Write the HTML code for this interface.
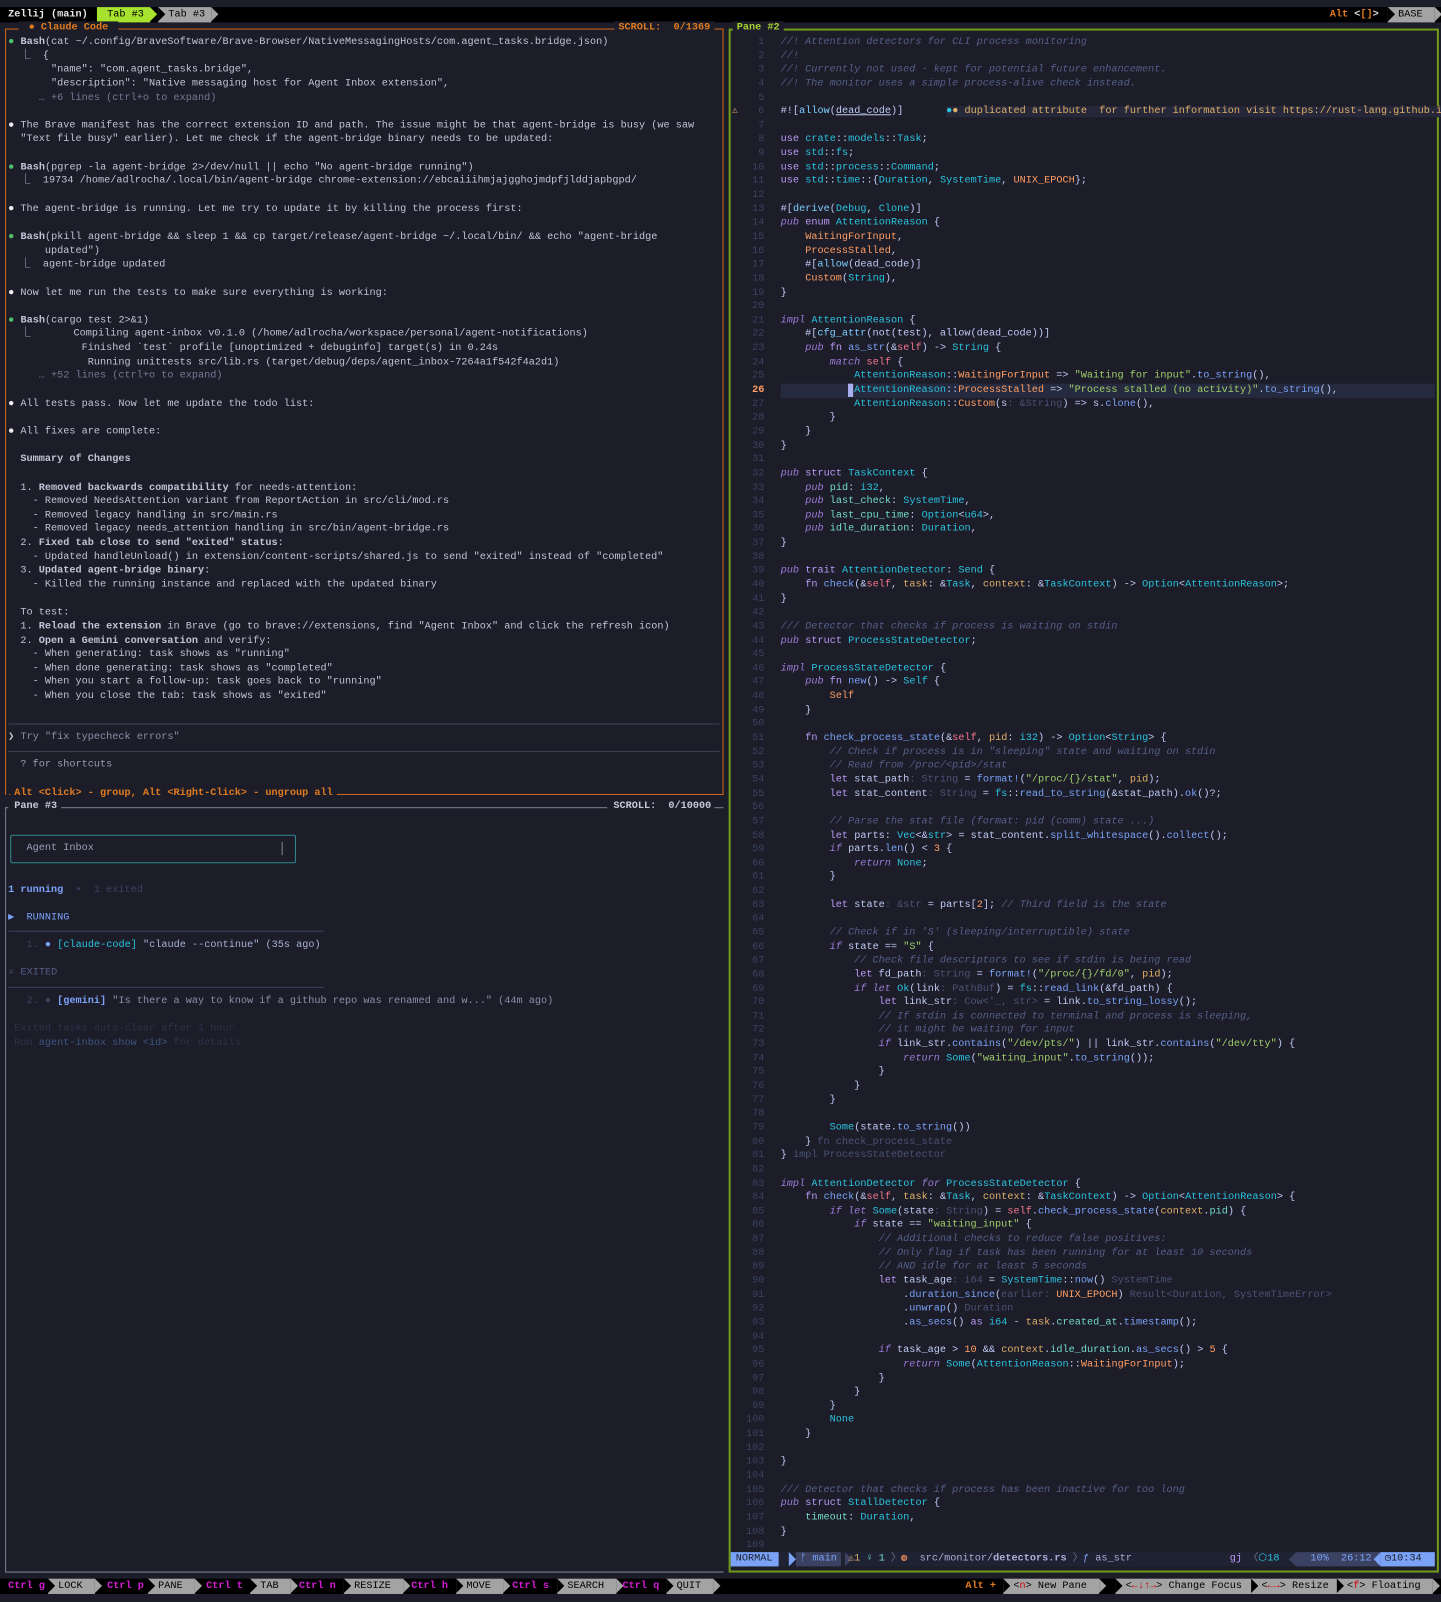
<!DOCTYPE html>
<html><head><meta charset="utf-8">
<style>
html,body{margin:0;padding:0;background:#1c1d29;width:1441px;height:1600px;overflow:hidden}
#w{position:absolute;left:0;top:1.5px;width:1412px;height:1568px;transform:scale(1.0205);transform-origin:0 0;background:#1c1d29;font-family:"Liberation Mono","DejaVu Sans Mono",monospace;font-size:10px;color:#c0c4d6}
.a{position:absolute;white-space:pre;line-height:13.65px}
.blk{position:absolute;left:0;width:1412px;height:15px;background:#000}
.bx{position:absolute;box-sizing:border-box}
.a.lines{white-space:normal}
.lines div{height:13.65px;white-space:pre}
.c{color:#565f89;font-style:italic}.k{color:#9d7cd8;font-style:italic}.kw{color:#bb9af7}
.t{color:#2ac3de}.f{color:#7aa2f7}.s{color:#9ece6a}.o{color:#ff9e64}.p{color:#73daca}
.h{color:#4b5275}.n{color:#c0caf5}.m{color:#7dcfff}.y{color:#e0af68}.r{color:#f7768e}
.b{font-weight:bold}.g{color:#737a94}.d{color:#3b4261}
#code div{position:relative;padding-left:51px}
#code .ln{position:absolute;left:0;width:35px;text-align:right;color:#3b4261}
.tag{position:absolute;top:0;height:15px;line-height:15px;background:#a3a3a3;color:#000;padding:0 6px 0 10px;white-space:pre}
.tag:after{content:"";position:absolute;right:-7px;top:0;border-left:7px solid #a3a3a3;border-top:7.5px solid transparent;border-bottom:7.5px solid transparent}
.tag:before{content:"";position:absolute;left:0;top:0;border-left:7px solid #000;border-top:7.5px solid transparent;border-bottom:7.5px solid transparent}
.mg{position:absolute;top:0;line-height:15px;color:#d41cd4;font-weight:bold;white-space:pre}
</style></head><body><div id="w">

<div class="blk" style="top:5px"></div>
<div class="a b" style="left:8px;top:5px;line-height:15px;color:#e8e8e8">Zellij (main)</div>
<div class="bx" style="left:95px;top:5px;height:15px;width:52px;background:#a6e22e;"></div>
<div class="bx" style="left:147px;top:5px;border-left:7px solid #a6e22e;border-top:7.5px solid transparent;border-bottom:7.5px solid transparent"></div>
<div class="a" style="left:105px;top:5px;line-height:15px;color:#000">Tab #3</div>
<div class="bx" style="left:155px;top:5px;height:15px;width:52px;background:#a3a3a3;"></div>
<div class="bx" style="left:207px;top:5px;border-left:7px solid #a3a3a3;border-top:7.5px solid transparent;border-bottom:7.5px solid transparent"></div>
<div class="bx" style="left:155px;top:5px;border-left:7px solid #000;border-top:7.5px solid transparent;border-bottom:7.5px solid transparent"></div>
<div class="a" style="left:165px;top:5px;line-height:15px;color:#000">Tab #3</div>
<div class="a b" style="left:1303px;top:5px;line-height:15px;color:#e07a1f">Alt <span style="color:#ddd">&lt;</span>[]<span style="color:#ddd">&gt;</span></div>
<div class="tag" style="left:1360px;top:5px">BASE </div>

<div class="bx" style="left:5px;top:26px;width:704px;height:751px;border:1px solid #d2691e;border-right:none;border-bottom:none"></div>
<div class="bx" style="left:9px;top:776px;width:700px;height:1px;background:#d2691e"></div>
<div class="a b" style="left:18px;top:19px;background:#1c1d29;color:#e07a1f;padding:0 4px"> ● Claude Code </div>
<div class="a b" style="left:602px;top:19px;background:#1c1d29;color:#e07a1f;padding:0 4px">SCROLL:  0/1369</div>
<div class="a b" style="left:10px;top:769px;background:#1c1d29;color:#e07a1f;padding:0 4px">Alt &lt;Click&gt; - group, Alt &lt;Right-Click&gt; - ungroup all</div>

<div class="a lines" style="left:8px;top:33px;width:697px">
<div><span style="color:#4fc06a">●</span> <span class="b">Bash</span>(cat ~/.config/BraveSoftware/Brave-Browser/NativeMessagingHosts/com.agent_tasks.bridge.json)</div>
<div>  ⎿  {</div>
<div>       "name": "com.agent_tasks.bridge",</div>
<div>       "description": "Native messaging host for Agent Inbox extension",</div>
<div class="g">     … +6 lines (ctrl+o to expand)</div>
<div></div>
<div><span style="color:#eee">●</span> The Brave manifest has the correct extension ID and path. The issue might be that agent-bridge is busy (we saw</div>
<div>  "Text file busy" earlier). Let me check if the agent-bridge binary needs to be updated:</div>
<div></div>
<div><span style="color:#4fc06a">●</span> <span class="b">Bash</span>(pgrep -la agent-bridge 2&gt;/dev/null || echo "No agent-bridge running")</div>
<div>  ⎿  19734 /home/adlrocha/.local/bin/agent-bridge chrome-extension://ebcaiiihmjajgghojmdpfjlddjapbgpd/</div>
<div></div>
<div><span style="color:#eee">●</span> The agent-bridge is running. Let me try to update it by killing the process first:</div>
<div></div>
<div><span style="color:#4fc06a">●</span> <span class="b">Bash</span>(pkill agent-bridge &amp;&amp; sleep 1 &amp;&amp; cp target/release/agent-bridge ~/.local/bin/ &amp;&amp; echo "agent-bridge</div>
<div>      updated")</div>
<div>  ⎿  agent-bridge updated</div>
<div></div>
<div><span style="color:#eee">●</span> Now let me run the tests to make sure everything is working:</div>
<div></div>
<div><span style="color:#4fc06a">●</span> <span class="b">Bash</span>(cargo test 2&gt;&amp;1)</div>
<div>  ⎿       Compiling agent-inbox v0.1.0 (/home/adlrocha/workspace/personal/agent-notifications)</div>
<div>            Finished `test` profile [unoptimized + debuginfo] target(s) in 0.24s</div>
<div>             Running unittests src/lib.rs (target/debug/deps/agent_inbox-7264a1f542f4a2d1)</div>
<div class="g">     … +52 lines (ctrl+o to expand)</div>
<div></div>
<div><span style="color:#eee">●</span> All tests pass. Now let me update the todo list:</div>
<div></div>
<div><span style="color:#eee">●</span> All fixes are complete:</div>
<div></div>
<div class="b">  Summary of Changes</div>
<div></div>
<div>  1. <b>Removed backwards compatibility</b> for needs-attention:</div>
<div>    - Removed NeedsAttention variant from ReportAction in src/cli/mod.rs</div>
<div>    - Removed legacy handling in src/main.rs</div>
<div>    - Removed legacy needs_attention handling in src/bin/agent-bridge.rs</div>
<div>  2. <b>Fixed tab close to send "exited" status</b>:</div>
<div>    - Updated handleUnload() in extension/content-scripts/shared.js to send "exited" instead of "completed"</div>
<div>  3. <b>Updated agent-bridge binary</b>:</div>
<div>    - Killed the running instance and replaced with the updated binary</div>
<div></div>
<div>  To test:</div>
<div>  1. <b>Reload the extension</b> in Brave (go to brave://extensions, find "Agent Inbox" and click the refresh icon)</div>
<div>  2. <b>Open a Gemini conversation</b> and verify:</div>
<div>    - When generating: task shows as "running"</div>
<div>    - When done generating: task shows as "completed"</div>
<div>    - When you start a follow-up: task goes back to "running"</div>
<div>    - When you close the tab: task shows as "exited"</div>
</div>
<div class="bx" style="left:8px;top:707px;width:697px;height:1px;background:#3e4256"></div>
<div class="a" style="left:8px;top:714px;color:#8a8fa6"><span style="color:#ccc">❯</span> Try "fix typecheck errors"</div>
<div class="bx" style="left:8px;top:734px;width:697px;height:1px;background:#3e4256"></div>
<div class="a" style="left:8px;top:741px;color:#9a9fb4">  ? for shortcuts</div>

<div class="bx" style="left:5px;top:789px;width:704px;height:750px;border:1px solid #7a7f96;border-top:none;border-right:none"></div>
<div class="bx" style="left:5px;top:789px;width:3px;height:1px;background:#7a7f96"></div>
<div class="bx" style="left:60px;top:789px;width:535px;height:1px;background:#7a7f96"></div>
<div class="bx" style="left:700px;top:789px;width:9px;height:1px;background:#7a7f96"></div>
<div class="bx" style="left:8px;top:1538px;width:701px;height:1px;background:#7a7f96"></div>
<div class="a b" style="left:14px;top:782px;color:#c8cad8">Pane #3</div>
<div class="a b" style="left:601px;top:782px;color:#c8cad8">SCROLL:  0/10000</div>
<div class="bx" style="left:10px;top:816px;width:280px;height:28px;border:1px solid #2e8a8f;border-radius:2px"></div>
<div class="bx" style="left:276px;top:823px;width:1px;height:13px;background:#888"></div>
<div class="a" style="left:26px;top:823px;color:#9aa0b8">Agent Inbox</div>
<div class="a" style="left:8px;top:864px"><span class="b f">1 running</span>  <span class="d">•  1 exited</span></div>
<div class="a" style="left:8px;top:891px;color:#7aa2f7">▶  RUNNING</div>
<div class="bx" style="left:8px;top:910px;width:309px;height:1px;background:#3b4261"></div>
<div class="a" style="left:8px;top:918px"><span class="d">   1.</span> <span class="f">●</span> <span class="t">[claude-code]</span> <span style="color:#a9b1d6">"claude --continue" (35s ago)</span></div>
<div class="a" style="left:8px;top:945px;color:#3b4261"><span>✕</span> <span style="color:#565f89">EXITED</span></div>
<div class="bx" style="left:8px;top:965px;width:309px;height:1px;background:#3b4261"></div>
<div class="a" style="left:8px;top:973px"><span class="d">   2. ●</span> <span class="f b">[gemini]</span> <span style="color:#8a90a8">"Is there a way to know if a github repo was renamed and w..." (44m ago)</span></div>
<div class="a" style="left:14px;top:1000px;color:#2d3249">Exited tasks auto-clear after 1 hour</div>
<div class="a" style="left:14px;top:1014px;color:#2d3249">Run <span style="color:#3d5580">agent-inbox show &lt;id&gt;</span> for details</div>

<div class="bx" style="left:714px;top:26px;width:696px;height:1513px;border:2px solid #6f9a1a"></div>
<div class="a b" style="left:718px;top:19px;background:#1c1d29;color:#a6d22e;padding:0 4px">Pane #2</div>
<div class="bx" style="left:708px;top:26px;width:1px;height:751px;background:#d2691e"></div>

<div class="bx" style="left:765px;top:374px;width:641px;height:13.65px;background:#262a3e"></div>
<div class="bx" style="left:831px;top:374px;width:5px;height:13px;background:#a9b1f0"></div>
<div class="a" style="left:717px;top:101px;color:#e0af68">⚠</div>

<div id="code" class="a lines" style="left:714px;top:33px;width:692px;color:#c0caf5">
<div><span class="ln">1</span><span class="c">//! Attention detectors for CLI process monitoring</span></div>
<div><span class="ln">2</span><span class="c">//!</span></div>
<div><span class="ln">3</span><span class="c">//! Currently not used - kept for potential future enhancement.</span></div>
<div><span class="ln">4</span><span class="c">//! The monitor uses a simple process-alive check instead.</span></div>
<div><span class="ln">5</span></div>
<div><span class="ln">6</span>#![<span class="m">allow</span>(<u>dead_code</u>)]       <span style="background:#26283a;color:#e0af68"><span class="t">●</span>● duplicated attribute  for further information visit https://rust-lang.github.i</span></div>
<div><span class="ln">7</span></div>
<div><span class="ln">8</span><span class="kw">use</span> <span class="t">crate</span>::<span class="t">models</span>::<span class="t">Task</span>;</div>
<div><span class="ln">9</span><span class="kw">use</span> <span class="t">std</span>::<span class="t">fs</span>;</div>
<div><span class="ln">10</span><span class="kw">use</span> <span class="t">std</span>::<span class="t">process</span>::<span class="t">Command</span>;</div>
<div><span class="ln">11</span><span class="kw">use</span> <span class="t">std</span>::<span class="t">time</span>::{<span class="t">Duration</span>, <span class="t">SystemTime</span>, <span class="o">UNIX_EPOCH</span>};</div>
<div><span class="ln">12</span></div>
<div><span class="ln">13</span>#[<span class="m">derive</span>(<span class="t">Debug</span>, <span class="t">Clone</span>)]</div>
<div><span class="ln">14</span><span class="k">pub</span> <span class="kw">enum</span> <span class="t">AttentionReason</span> {</div>
<div><span class="ln">15</span>    <span class="o">WaitingForInput</span>,</div>
<div><span class="ln">16</span>    <span class="o">ProcessStalled</span>,</div>
<div><span class="ln">17</span>    #[<span class="m">allow</span>(dead_code)]</div>
<div><span class="ln">18</span>    <span class="o">Custom</span>(<span class="t">String</span>),</div>
<div><span class="ln">19</span>}</div>
<div><span class="ln">20</span></div>
<div><span class="ln">21</span><span class="k">impl</span> <span class="t">AttentionReason</span> {</div>
<div><span class="ln">22</span>    #[<span class="m">cfg_attr</span>(not(test), allow(dead_code))]</div>
<div><span class="ln">23</span>    <span class="k">pub</span> <span class="kw">fn</span> <span class="f">as_str</span>(&amp;<span class="r">self</span>) -&gt; <span class="t">String</span> {</div>
<div><span class="ln">24</span>        <span class="k">match</span> <span class="r">self</span> {</div>
<div><span class="ln">25</span>            <span class="t">AttentionReason</span>::<span class="o">WaitingForInput</span> =&gt; <span class="s">"Waiting for input"</span>.<span class="f">to_string</span>(),</div>
<div><span class="ln" style="color:#ff9e64;font-weight:bold">26</span>            <span class="t">AttentionReason</span>::<span class="o">ProcessStalled</span> =&gt; <span class="s">"Process stalled (no activity)"</span>.<span class="f">to_string</span>(),</div>
<div><span class="ln">27</span>            <span class="t">AttentionReason</span>::<span class="o">Custom</span>(s<span class="h">: &amp;String</span>) =&gt; s.<span class="f">clone</span>(),</div>
<div><span class="ln">28</span>        }</div>
<div><span class="ln">29</span>    }</div>
<div><span class="ln">30</span>}</div>
<div><span class="ln">31</span></div>
<div><span class="ln">32</span><span class="k">pub</span> <span class="kw">struct</span> <span class="t">TaskContext</span> {</div>
<div><span class="ln">33</span>    <span class="k">pub</span> <span class="p">pid</span>: <span class="t">i32</span>,</div>
<div><span class="ln">34</span>    <span class="k">pub</span> <span class="p">last_check</span>: <span class="t">SystemTime</span>,</div>
<div><span class="ln">35</span>    <span class="k">pub</span> <span class="p">last_cpu_time</span>: <span class="t">Option</span>&lt;<span class="t">u64</span>&gt;,</div>
<div><span class="ln">36</span>    <span class="k">pub</span> <span class="p">idle_duration</span>: <span class="t">Duration</span>,</div>
<div><span class="ln">37</span>}</div>
<div><span class="ln">38</span></div>
<div><span class="ln">39</span><span class="k">pub</span> <span class="kw">trait</span> <span class="t">AttentionDetector</span>: <span class="t">Send</span> {</div>
<div><span class="ln">40</span>    <span class="kw">fn</span> <span class="f">check</span>(&amp;<span class="r">self</span>, <span class="y">task</span>: &amp;<span class="t">Task</span>, <span class="y">context</span>: &amp;<span class="t">TaskContext</span>) -&gt; <span class="t">Option</span>&lt;<span class="t">AttentionReason</span>&gt;;</div>
<div><span class="ln">41</span>}</div>
<div><span class="ln">42</span></div>
<div><span class="ln">43</span><span class="c">/// Detector that checks if process is waiting on stdin</span></div>
<div><span class="ln">44</span><span class="k">pub</span> <span class="kw">struct</span> <span class="t">ProcessStateDetector</span>;</div>
<div><span class="ln">45</span></div>
<div><span class="ln">46</span><span class="k">impl</span> <span class="t">ProcessStateDetector</span> {</div>
<div><span class="ln">47</span>    <span class="k">pub</span> <span class="kw">fn</span> <span class="f">new</span>() -&gt; <span class="t">Self</span> {</div>
<div><span class="ln">48</span>        <span class="o">Self</span></div>
<div><span class="ln">49</span>    }</div>
<div><span class="ln">50</span></div>
<div><span class="ln">51</span>    <span class="kw">fn</span> <span class="f">check_process_state</span>(&amp;<span class="r">self</span>, <span class="y">pid</span>: <span class="t">i32</span>) -&gt; <span class="t">Option</span>&lt;<span class="t">String</span>&gt; {</div>
<div><span class="ln">52</span>        <span class="c">// Check if process is in "sleeping" state and waiting on stdin</span></div>
<div><span class="ln">53</span>        <span class="c">// Read from /proc/&lt;pid&gt;/stat</span></div>
<div><span class="ln">54</span>        <span class="kw">let</span> stat_path<span class="h">: String</span> = <span class="f">format!</span>(<span class="s">"/proc/{}/stat"</span>, <span class="y">pid</span>);</div>
<div><span class="ln">55</span>        <span class="kw">let</span> stat_content<span class="h">: String</span> = <span class="t">fs</span>::<span class="f">read_to_string</span>(&amp;stat_path).<span class="f">ok</span>()?;</div>
<div><span class="ln">56</span></div>
<div><span class="ln">57</span>        <span class="c">// Parse the stat file (format: pid (comm) state ...)</span></div>
<div><span class="ln">58</span>        <span class="kw">let</span> parts: <span class="t">Vec</span>&lt;&amp;<span class="t">str</span>&gt; = stat_content.<span class="f">split_whitespace</span>().<span class="f">collect</span>();</div>
<div><span class="ln">59</span>        <span class="k">if</span> parts.<span class="f">len</span>() &lt; <span class="o">3</span> {</div>
<div><span class="ln">60</span>            <span class="k">return</span> <span class="t">None</span>;</div>
<div><span class="ln">61</span>        }</div>
<div><span class="ln">62</span></div>
<div><span class="ln">63</span>        <span class="kw">let</span> state<span class="h">: &amp;str</span> = parts[<span class="o">2</span>]; <span class="c">// Third field is the state</span></div>
<div><span class="ln">64</span></div>
<div><span class="ln">65</span>        <span class="c">// Check if in 'S' (sleeping/interruptible) state</span></div>
<div><span class="ln">66</span>        <span class="k">if</span> state == <span class="s">"S"</span> {</div>
<div><span class="ln">67</span>            <span class="c">// Check file descriptors to see if stdin is being read</span></div>
<div><span class="ln">68</span>            <span class="kw">let</span> fd_path<span class="h">: String</span> = <span class="f">format!</span>(<span class="s">"/proc/{}/fd/0"</span>, <span class="y">pid</span>);</div>
<div><span class="ln">69</span>            <span class="k">if let</span> <span class="t">Ok</span>(link<span class="h">: PathBuf</span>) = <span class="t">fs</span>::<span class="f">read_link</span>(&amp;fd_path) {</div>
<div><span class="ln">70</span>                <span class="kw">let</span> link_str<span class="h">: Cow&lt;'_, str&gt;</span> = link.<span class="f">to_string_lossy</span>();</div>
<div><span class="ln">71</span>                <span class="c">// If stdin is connected to terminal and process is sleeping,</span></div>
<div><span class="ln">72</span>                <span class="c">// it might be waiting for input</span></div>
<div><span class="ln">73</span>                <span class="k">if</span> link_str.<span class="f">contains</span>(<span class="s">"/dev/pts/"</span>) || link_str.<span class="f">contains</span>(<span class="s">"/dev/tty"</span>) {</div>
<div><span class="ln">74</span>                    <span class="k">return</span> <span class="t">Some</span>(<span class="s">"waiting_input"</span>.<span class="f">to_string</span>());</div>
<div><span class="ln">75</span>                }</div>
<div><span class="ln">76</span>            }</div>
<div><span class="ln">77</span>        }</div>
<div><span class="ln">78</span></div>
<div><span class="ln">79</span>        <span class="t">Some</span>(state.<span class="f">to_string</span>())</div>
<div><span class="ln">80</span>    } <span class="h">fn check_process_state</span></div>
<div><span class="ln">81</span>} <span class="h">impl ProcessStateDetector</span></div>
<div><span class="ln">82</span></div>
<div><span class="ln">83</span><span class="k">impl</span> <span class="t">AttentionDetector</span> <span class="k">for</span> <span class="t">ProcessStateDetector</span> {</div>
<div><span class="ln">84</span>    <span class="kw">fn</span> <span class="f">check</span>(&amp;<span class="r">self</span>, <span class="y">task</span>: &amp;<span class="t">Task</span>, <span class="y">context</span>: &amp;<span class="t">TaskContext</span>) -&gt; <span class="t">Option</span>&lt;<span class="t">AttentionReason</span>&gt; {</div>
<div><span class="ln">85</span>        <span class="k">if let</span> <span class="t">Some</span>(state<span class="h">: String</span>) = <span class="r">self</span>.<span class="f">check_process_state</span>(<span class="y">context</span>.<span class="p">pid</span>) {</div>
<div><span class="ln">86</span>            <span class="k">if</span> state == <span class="s">"waiting_input"</span> {</div>
<div><span class="ln">87</span>                <span class="c">// Additional checks to reduce false positives:</span></div>
<div><span class="ln">88</span>                <span class="c">// Only flag if task has been running for at least 10 seconds</span></div>
<div><span class="ln">89</span>                <span class="c">// AND idle for at least 5 seconds</span></div>
<div><span class="ln">90</span>                <span class="kw">let</span> task_age<span class="h">: i64</span> = <span class="t">SystemTime</span>::<span class="f">now</span>() <span class="h">SystemTime</span></div>
<div><span class="ln">91</span>                    .<span class="f">duration_since</span>(<span class="h">earlier: </span><span class="o">UNIX_EPOCH</span>) <span class="h">Result&lt;Duration, SystemTimeError&gt;</span></div>
<div><span class="ln">92</span>                    .<span class="f">unwrap</span>() <span class="h">Duration</span></div>
<div><span class="ln">93</span>                    .<span class="f">as_secs</span>() <span class="kw">as</span> <span class="t">i64</span> - <span class="y">task</span>.<span class="p">created_at</span>.<span class="f">timestamp</span>();</div>
<div><span class="ln">94</span></div>
<div><span class="ln">95</span>                <span class="k">if</span> task_age &gt; <span class="o">10</span> &amp;&amp; <span class="y">context</span>.<span class="p">idle_duration</span>.<span class="f">as_secs</span>() &gt; <span class="o">5</span> {</div>
<div><span class="ln">96</span>                    <span class="k">return</span> <span class="t">Some</span>(<span class="t">AttentionReason</span>::<span class="o">WaitingForInput</span>);</div>
<div><span class="ln">97</span>                }</div>
<div><span class="ln">98</span>            }</div>
<div><span class="ln">99</span>        }</div>
<div><span class="ln">100</span>        <span class="t">None</span></div>
<div><span class="ln">101</span>    }</div>
<div><span class="ln">102</span></div>
<div><span class="ln">103</span>}</div>
<div><span class="ln">104</span></div>
<div><span class="ln">105</span><span class="c">/// Detector that checks if process has been inactive for too long</span></div>
<div><span class="ln">106</span><span class="k">pub</span> <span class="kw">struct</span> <span class="t">StallDetector</span> {</div>
<div><span class="ln">107</span>    <span class="p">timeout</span>: <span class="t">Duration</span>,</div>
<div><span class="ln">108</span>}</div>
<div><span class="ln">109</span></div>
</div>

<div class="bx" style="left:716px;top:1519px;width:690px;height:14px;background:#1f2233"></div>
<div class="a" style="left:716px;top:1519px;line-height:14px;background:#7aa2f7;color:#1a1b26;padding:0 6px 0 5px">NORMAL</div>
<div class="bx" style="left:773px;top:1519px;border-left:7px solid #7aa2f7;border-top:7px solid transparent;border-bottom:7px solid transparent"></div>
<div class="a" style="left:780px;top:1519px;line-height:14px;background:#3b4261;color:#7aa2f7;padding:0 4px">ᚠ main</div>
<div class="bx" style="left:828px;top:1519px;border-left:7px solid #3b4261;border-top:7px solid transparent;border-bottom:7px solid transparent"></div>
<div class="a" style="left:831px;top:1519px;line-height:14px"><span class="y">⚠1</span> <span class="p">♀ 1</span> <span class="g">〉</span><span class="o">◍</span>  <span style="color:#a9b1d6">src/monitor/<b>detectors.rs</b></span> <span class="g">〉</span><span class="f">ƒ</span> <span style="color:#a9b1d6">as_str</span></div>
<div class="a" style="left:1205px;top:1519px;line-height:14px"><span class="kw">gj</span> <span class="g">〈</span><span class="t">⬡18</span></div>
<div class="bx" style="left:1263px;top:1519px;border-right:7px solid #3b4261;border-top:7px solid transparent;border-bottom:7px solid transparent"></div>
<div class="a" style="left:1270px;top:1519px;line-height:14px;background:#3b4261;color:#7aa2f7;padding:0 8px 0 8px;width:68px"> 10%  26:12</div>
<div class="bx" style="left:1346px;top:1519px;border-right:7px solid #7aa2f7;border-top:7px solid transparent;border-bottom:7px solid transparent"></div>
<div class="a" style="left:1353px;top:1519px;line-height:14px;background:#7aa2f7;color:#1a1b26;padding:0 4px;width:45px">◷10:34</div>

<div class="blk" style="top:1545px"></div>
<div style="position:absolute;left:0;top:1545px;width:1412px;height:15px">
<span class="mg" style="left:8px">Ctrl g</span><span class="tag" style="left:47px">LOCK </span>
<span class="mg" style="left:105px">Ctrl p</span><span class="tag" style="left:145px">PANE </span>
<span class="mg" style="left:202px">Ctrl t</span><span class="tag" style="left:245px">TAB </span>
<span class="mg" style="left:293px">Ctrl n</span><span class="tag" style="left:337px">RESIZE </span>
<span class="mg" style="left:403px">Ctrl h</span><span class="tag" style="left:447px">MOVE </span>
<span class="mg" style="left:502px">Ctrl s</span><span class="tag" style="left:546px">SEARCH </span>
<span class="mg" style="left:610px">Ctrl q</span><span class="tag" style="left:653px">QUIT </span>
<span class="mg" style="left:946px;color:#e07a1f">Alt +</span>
<span class="tag" style="left:983px">&lt;<span style="color:#c00">n</span>&gt; New Pane </span>
<span class="tag" style="left:1093px">&lt;<span style="color:#c00">←↓↑→</span>&gt; Change Focus </span>
<span class="tag" style="left:1226px">&lt;<span style="color:#c00">←→</span>&gt; Resize </span>
<span class="tag" style="left:1310px">&lt;<span style="color:#c00">f</span>&gt; Floating </span>
</div>

</div></body></html>
